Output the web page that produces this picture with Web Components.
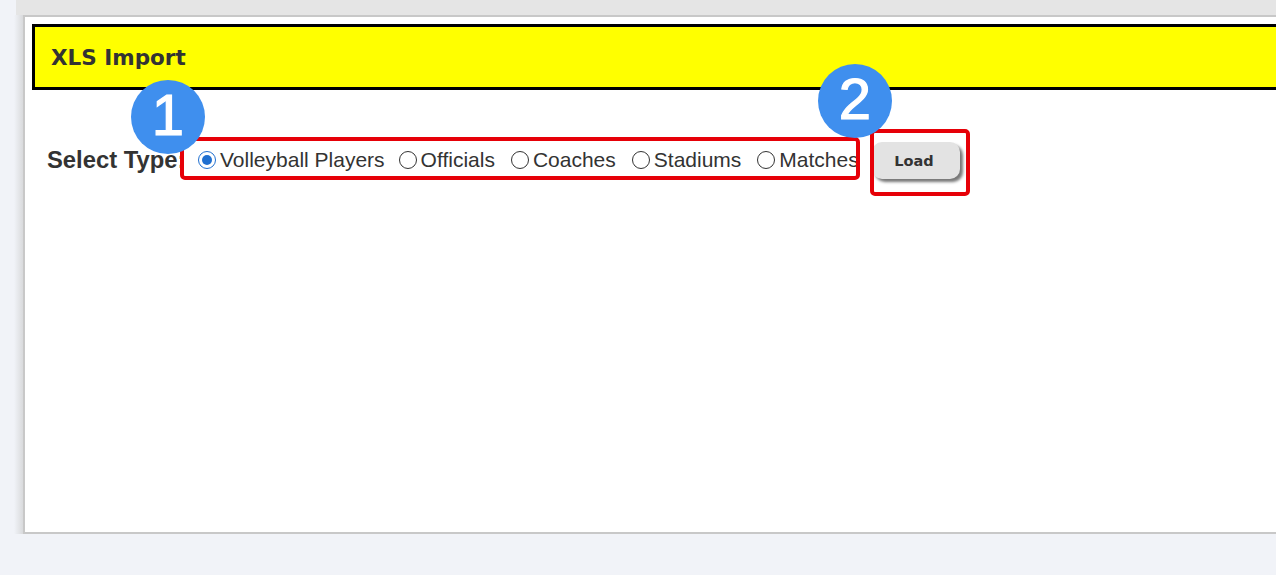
<!DOCTYPE html>
<html><head><meta charset="utf-8"><title>XLS Import</title>
<style>
html,body{margin:0;padding:0;height:575px;overflow:hidden;background:#f1f3f8;}
</style></head>
<body>
<template id="t-shell"><style>
:host{display:block;width:1276px;height:575px;overflow:hidden;box-sizing:border-box;padding-left:14px;font-family:"Liberation Sans",Arial,sans-serif;color:#333;}
.top{height:15px;margin-left:2px;background:#e5e5e5;}
.wrap{padding-left:9px;background:linear-gradient(90deg,#f1f3f8,#d9dadc) no-repeat 0 0/9px 100%;}
::slotted(*){display:block;}
</style><div class="top"></div><div class="wrap"><slot></slot></div></template>

<template id="t-panel"><style>
:host{display:block;position:relative;box-sizing:border-box;height:519px;width:1300px;background:#fff;border:2px solid #c8c8c8;border-right:0;padding:7px 0 0 7px;}
</style><slot></slot></template>

<template id="t-title"><style>
:host{display:block;box-sizing:border-box;height:66px;background:#ff0;border:3px solid #000;padding-left:16px;display:flex;align-items:center;font:bold 21.5px "DejaVu Sans",Verdana,sans-serif;color:#333;}
</style><slot></slot></template>

<template id="t-form"><style>
:host{display:flex;align-items:center;height:36px;margin:52px 0 0 15px;}
.l{font:bold 23.8px "Liberation Sans",Arial,sans-serif;color:#333;width:151px;white-space:nowrap;}
.g{display:flex;align-items:center;gap:15px;width:674px;}
</style><div class="l"><slot name="label"></slot></div><div class="g"><slot></slot></div><slot name="action"></slot></template>

<template id="t-radio"><style>
:host{display:inline-flex;align-items:center;gap:4px;font:21px "Liberation Sans",Arial,sans-serif;color:#333;white-space:nowrap;}
.r{width:18px;height:18px;box-sizing:border-box;border:1.5px solid #333;border-radius:50%;background:#fff;display:flex;align-items:center;justify-content:center;}
:host([checked]) .r{border-color:#1f6fd0;}
:host([checked]) .r::after{content:"";width:10px;height:10px;border-radius:50%;background:#1f6fd0;}
</style><span class="r"></span><slot></slot></template>

<template id="t-btn"><style>
:host{display:flex;align-items:center;justify-content:center;box-sizing:border-box;width:88px;height:37px;padding:2px 4px 0 0;background:#e3e3e3;border-radius:10px;box-shadow:3px 3px 3px #777;font:bold 14.5px "DejaVu Sans",Verdana,sans-serif;color:#333;}
</style><slot></slot></template>

<template id="t-mark"><style>
:host{display:block;position:absolute;box-sizing:border-box;border:4px solid #e60008;border-radius:5px;}
</style></template>

<template id="t-badge"><style>
:host{display:flex;position:absolute;box-sizing:border-box;width:74px;height:74px;padding-bottom:5px;border-radius:50%;background:#3f8fee;color:#fff;align-items:center;justify-content:center;font:58px "Liberation Sans",Arial,sans-serif;line-height:1;-webkit-text-stroke:1.2px #fff;}
</style><slot></slot></template>

<x-shell>
  <x-panel>
    <x-title>XLS Import</x-title>
    <x-form>
      <span slot="label">Select Type:</span>
      <x-radio checked>Volleyball Players</x-radio>
      <x-radio style="margin-left:-1px">Officials</x-radio>
      <x-radio style="margin-left:1px">Coaches</x-radio>
      <x-radio style="margin-left:1px">Stadiums</x-radio>
      <x-radio style="margin-left:1px">Matches</x-radio>
      <x-btn slot="action">Load</x-btn>
    </x-form>
    <x-mark style="left:155px;top:120px;width:680px;height:43px"></x-mark>
    <x-mark style="left:845px;top:112px;width:100px;height:67px"></x-mark>
    <x-badge style="left:106px;top:63px">1</x-badge>
    <x-badge style="left:793px;top:47px">2</x-badge>
  </x-panel>
</x-shell>
<script>
for (const n of ['shell','panel','title','form','radio','btn','mark','badge']) {
  customElements.define('x-'+n, class extends HTMLElement {
    constructor(){super();this.attachShadow({mode:'open'}).appendChild(document.getElementById('t-'+n).content.cloneNode(true));}
  });
}
</script>
</body></html>
